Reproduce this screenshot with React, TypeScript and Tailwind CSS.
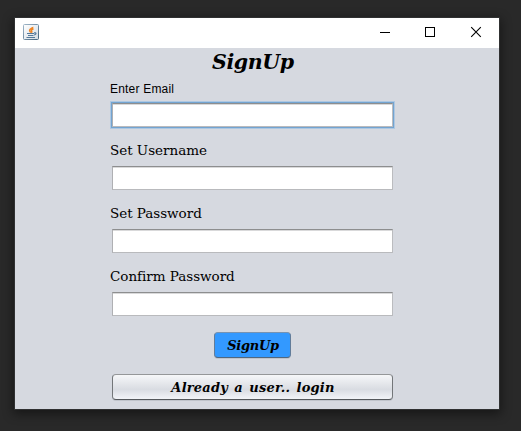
import React from 'react';

const labelSerif = "font-['DejaVu_Serif','Liberation_Serif',serif] text-[13.5px] tracking-[-0.03px]";
const boldSerif = "font-['DejaVu_Serif','Liberation_Serif',serif] font-bold italic";

function JavaIcon() {
  return (
    <svg width="16" height="16" viewBox="0 0 16 16" fill="none">
      <defs>
        <linearGradient id="frame" x1="0" y1="0" x2="1" y2="1">
          <stop offset="0" stopColor="#9fb6c8" />
          <stop offset="1" stopColor="#45657f" />
        </linearGradient>
        <linearGradient id="face" x1="0" y1="0" x2="1" y2="1">
          <stop offset="0" stopColor="#ffffff" />
          <stop offset="1" stopColor="#d3dce4" />
        </linearGradient>
      </defs>
      <rect x=".5" y=".5" width="15" height="15" rx="1" fill="url(#face)" stroke="url(#frame)" />
      <path d="M9.8 2.8C10 4.2 6.5 4.7 6.6 6.5C6.6 7.4 7.6 7.8 7.7 8.8M10.5 4.8C8.4 5.6 8 6.4 8.7 7.2C9 7.7 8.8 8.2 8.4 8.8" stroke="#ef8422" strokeWidth="1.5" />
      <path d="M4 9.5H11M5 11.5H10.5M3.5 13.5H12M11 8.8H12.5C13.5 9.4 12.8 10.8 11 11" stroke="#54799a" strokeWidth="1.2" />
    </svg>
  );
}

function Field({ type = 'text', focused = false, label }: { type?: string; focused?: boolean; label: string }) {
  return (
    <div className={`h-6 w-[281px] ${focused ? 'shadow-[0_0_0_1px_#73a4d1,0_0_0_2px_#aec8e2]' : ''}`}>
      <input
        type={type}
        aria-label={label}
        className="block h-6 w-full border border-t-[#8d8e8f] border-r-[#bbbcbf] border-b-[#b9babd] border-l-[#afb0b3] bg-white px-1 shadow-[inset_0_1px_0_#d9d9da] outline-none"
      />
    </div>
  );
}

export default function App() {
  return (
    <div className="h-[431px] w-[521px] overflow-hidden bg-[#292929] pt-[18px] pl-[15px]">
      <div className="flex h-[391px] w-[484px] flex-col bg-[#d6d9e0] shadow-[0_0_0_1px_#303132,0_3px_10px_2px_rgba(0,0,0,0.45)]">
        <header className="flex h-[30px] shrink-0 items-start justify-between bg-white pt-1.5 pl-2">
          <JavaIcon />
          <svg width="119" height="18" viewBox="0 0 119 18" fill="none" stroke="#000" shapeRendering="crispEdges">
            <path d="M0 8.5H10" />
            <rect x="45.5" y="3.5" width="9" height="9" />
            <path d="M91.2 3.2L100.8 12.8M100.8 3.2L91.2 12.8" shapeRendering="auto" strokeWidth="1.1" />
          </svg>
        </header>
        <main className="flex flex-col pl-[97px] text-black">
          <h1 className={`${boldSerif} ml-[100px] h-7 text-[20.5px] leading-[28px] tracking-[-0.4px]`}>SignUp</h1>
          <label className="-ml-0.5 h-[27px] font-['Liberation_Sans',Arial,sans-serif] text-[12px] leading-[26px] tracking-[0.2px]">Enter Email</label>
          <Field focused label="Enter Email" />
          <label className={`${labelSerif} -ml-0.5 h-[39px] leading-[47px]`}>Set Username</label>
          <Field label="Set Username" />
          <label className={`${labelSerif} -ml-0.5 h-[39px] leading-[47px]`}>Set Password</label>
          <Field type="password" label="Set Password" />
          <label className={`${labelSerif} -ml-0.5 h-[39px] leading-[47px]`}>Confirm Password</label>
          <Field type="password" label="Confirm Password" />
          <button className={`${boldSerif} mt-4 ml-[102px] h-[26px] w-[77px] rounded-[4px] border border-t-[#7793b2] border-r-[#627c99] border-b-[#50677f] border-l-[#627c99] bg-[#3399ff] pt-px pl-px text-[13px] leading-[23px] tracking-[-0.3px] shadow-[0_1px_0_#c0c4cb]`}>
            SignUp
          </button>
          <button className={`${boldSerif} mt-4 h-[26px] w-[281px] rounded-[4px] border border-t-[#959799] border-r-[#737679] border-b-[#55585c] border-l-[#737679] bg-linear-to-b from-[#f6f7f9] via-[#d9dce2] via-60% to-[#f2f4f8] pt-px pl-px text-[13px] leading-[23px] tracking-[0.2px] [word-spacing:1.6px] shadow-[0_1px_0_#c0c4cb]`}>
            Already a user.. login
          </button>
        </main>
      </div>
    </div>
  );
}
